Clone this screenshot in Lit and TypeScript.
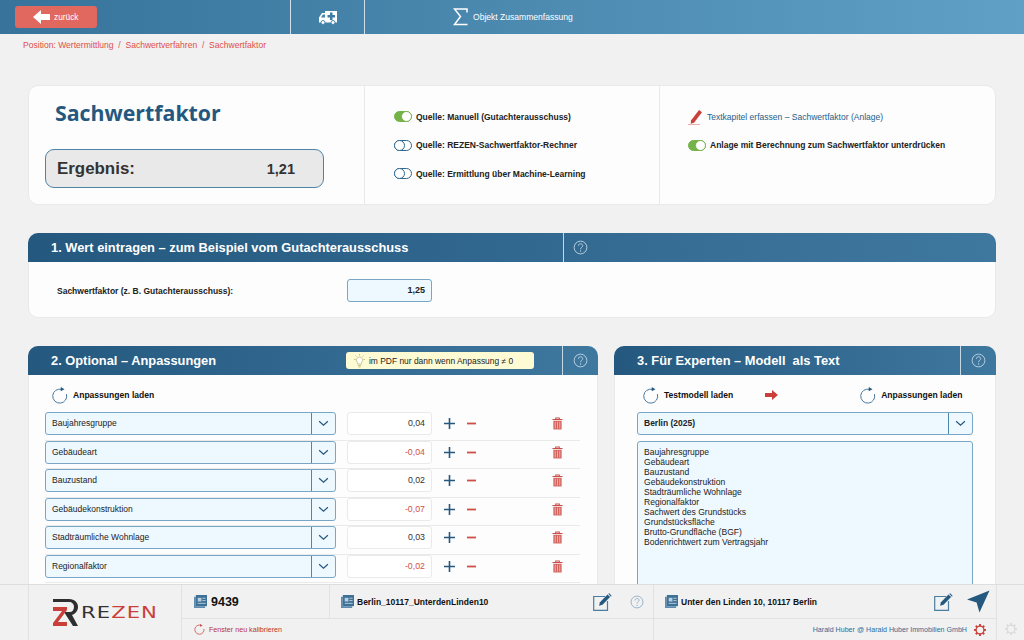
import { LitElement, html, css, svg } from 'lit';
import { customElement } from 'lit/decorators.js';

const HELP = html`<svg class="help" viewBox="0 0 16 16"><circle cx="8" cy="8" r="6.8" fill="none" stroke="currentColor" stroke-width="0.9"/><path d="M5.8 6.2c0-1.4 1-2.2 2.3-2.2s2.2.8 2.2 2c0 1.700-2.200 1.800-2.200 3.800" fill="none" stroke="currentColor" stroke-width="0.9"/><circle cx="8.100" cy="11.700" r=".7" fill="currentColor"/></svg>`;

const REFRESH = html`<svg class="refresh" viewBox="0 0 18 18"><path d="M11.300 3.100A7.400 7.400 0 1 0 16.300 8" fill="none" stroke="#3f7096" stroke-width="1"/><path d="M10.300 .6l4 2.300-4 2.200z" fill="#24587f"/></svg>`;

const CHEVRON = html`<svg class="chevron" viewBox="0 0 12 8"><path d="M1 1.500l5 4.500 5-4.500" fill="none" stroke="#24587f" stroke-width="1.400"/></svg>`;

const TRASH = html`<svg class="trash" viewBox="0 0 12 14"><path d="M.5 2.700h11M4 2.500V1h4v1.500" fill="none" stroke="#c9504a" stroke-width="1.100"/><path d="M1.500 4h9v9.500h-9z" fill="#d2625c"/><path d="M3.500 5v7.500M6 5v7.500M8.500 5v7.500" stroke="#f6dfdd" stroke-width=".7"/></svg>`;

const STACK = html`<svg class="stack" viewBox="0 0 14 14"><path d="M0 2h2v10h10v2H0z" fill="#5f8cae"/><rect x="2" y="0" width="12" height="12" fill="#3f7096"/><rect x="4" y="3" width="4" height="4" fill="#b9cede"/><path d="M9 3.500h3.500M9 6h3.500M4 9h8.500" stroke="#b9cede" stroke-width="1"/></svg>`;

const EDIT = html`<svg class="edit" viewBox="0 0 19 18"><path d="M12 3.500H.7v13.800h13.800V8" fill="none" stroke="#4a7da2" stroke-width="1.200"/><path d="M6 12.700l1-3.500 7.500-7.700 2.600 2.600-7.600 7.600z" fill="#24587f"/><path d="M15.300.8l.9-.5 2.400 2.400-.6 1z" fill="#24587f"/></svg>`;

const GEAR = (color: string) => html`<svg class="gear" viewBox="0 0 14 14"><circle cx="7" cy="7" r="4.600" fill="none" stroke=${color} stroke-width="1.500"/>${[0, 45, 90, 135, 180, 225, 270, 315].map((a) => svg`<rect x="5.900" y="0" width="2.200" height="2.600" fill=${color} transform="rotate(${a} 7 7)"/>`)}</svg>`;

const ADJUSTMENTS = [
  { name: 'Baujahresgruppe', value: '0,04' },
  { name: 'Gebäudeart', value: '-0,04' },
  { name: 'Bauzustand', value: '0,02' },
  { name: 'Gebäudekonstruktion', value: '-0,07' },
  { name: 'Stadträumliche Wohnlage', value: '0,03' },
  { name: 'Regionalfaktor', value: '-0,02' },
];

const MODEL_TEXT = [
  'Baujahresgruppe',
  'Gebäudeart',
  'Bauzustand',
  'Gebäudekonstruktion',
  'Stadträumliche Wohnlage',
  'Regionalfaktor',
  'Sachwert des Grundstücks',
  'Grundstücksfläche',
  'Brutto-Grundfläche (BGF)',
  'Bodenrichtwert zum Vertragsjahr',
];

@customElement('app-root')
export class AppRoot extends LitElement {
  static styles = css`
    :host {
      display: grid;
      grid-template-rows: 34px 1fr 56px;
      height: 640px;
      overflow: hidden;
      background: #f1f1f1;
      font-family: 'Liberation Sans', Arial, sans-serif;
      color: #222;
    }

    /* top bar */
    .topbar {
      display: grid;
      grid-template-columns: 290px 74px 1fr;
      background: linear-gradient(90deg, #37739a, #60a0c6);
      color: #fff;
    }
    .topcell { display: flex; align-items: center; }
    .topcell + .topcell { border-left: 1px solid #cfe0ea; }
    .back {
      display: flex;
      align-items: center;
      gap: 4px;
      box-sizing: border-box;
      width: 82px;
      height: 22px;
      margin-left: 15px;
      padding-left: 18px;
      background: #e0685f;
      border-radius: 3px;
      font-size: 8.300px;
    }
    .back svg { width: 17px; height: 14px; }
    .amb { justify-content: center; }
    .amb svg { width: 18px; height: 15px; }
    .summary { padding-left: 88px; gap: 5px; font-size: 8.550px; }
    .summary svg { width: 15px; height: 18px; }

    /* scroll area */
    .main { overflow: hidden; min-height: 0; padding: 0 28px; }
    .crumbs {
      margin: 0 -5px;
      height: 22px;
      line-height: 22px;
      font-size: 8.560px;
      color: #df5047;
      white-space: pre;
    }
    .card {
      background: #fdfdfd;
      border: 1px solid #e9e9e9;
      border-radius: 10px;
      box-sizing: border-box;
    }
    .overview {
      display: grid;
      grid-template-columns: 335px 295px 1fr;
      height: 120px;
      margin-top: 29px;
    }
    .col { padding-left: 29px; border-left: 1px solid #e9e9e9; }
    .col:first-child { border-left: 0; padding-left: 16px; }
    .col:last-child { padding-left: 28px; }
    .title {
      margin: 13px 0 0 10px;
      font: 700 21.300px/28px 'Open Sans', sans-serif;
      color: #24587f;
    }
    .result {
      display: flex;
      align-items: center;
      box-sizing: border-box;
      width: 279px;
      height: 39px;
      margin-top: 22px;
      padding: 0 28px 0 11px;
      background: #e9e9e9;
      border: 1px solid #4f83a8;
      border-radius: 9px;
      font-weight: 700;
      color: #333;
    }
    .result b { flex: 1; font-size: 16.900px; }
    .result span { font-size: 14.500px; }
    .opts { display: flex; flex-direction: column; gap: 17.500px; padding-top: 25px; }
    .opt { display: flex; align-items: center; gap: 4px; height: 11px; font-size: 8.500px; font-weight: 700; }
    .toggle {
      position: relative;
      box-sizing: border-box;
      flex: none;
      width: 18px;
      height: 11px;
      border: 1px solid #2f6790;
      border-radius: 6px;
      background: #fff;
    }
    .toggle::after {
      content: '';
      position: absolute;
      left: -1px;
      top: -1px;
      width: 9px;
      height: 9px;
      border: 1px solid #2f6790;
      border-radius: 50%;
      background: #fff;
    }
    .toggle.on { background: #74b348; border-color: #74b348; }
    .toggle.on::after { left: auto; right: -1px; border-color: #74b348; }
    .link { color: #24608c; font-weight: 400; gap: 4px; font-size: 8.520px; }
    .link svg { width: 15px; height: 16px; flex: none; }

    /* panels */
    .head {
      display: flex;
      align-items: center;
      height: 29px;
      margin: -1px -1px 0;
      border-radius: 10px 10px 0 0;
      background: linear-gradient(90deg, #24587f, #3f789f);
      color: #fff;
    }
    .head h2 { flex: 1; margin: 0; padding-left: 23px; font-size: 12.850px; font-weight: 700; }
    .head .tail {
      display: flex;
      align-items: center;
      justify-content: center;
      align-self: stretch;
      width: 35px;
      border-left: 1px solid #c6d8e4;
      color: #c8dae6;
    }
    .help { width: 15px; height: 15px; }
    .value-card { height: 85px; margin-top: 28px; }
    .value-card .tail { width: 433px; box-sizing: border-box; justify-content: flex-start; padding-left: 9px; }
    .value-row {
      display: grid;
      grid-template-columns: 290px 85px;
      align-items: center;
      padding: 17px 0 0 28px;
      font-size: 8.500px;
      font-weight: 700;
    }
    .num {
      box-sizing: border-box;
      height: 23px;
      line-height: 21px;
      padding-right: 6px;
      text-align: right;
      background: #eef8ff;
      border: 1px solid #79a6c5;
      border-radius: 3px;
      font-size: 9px;
      font-weight: 700;
    }
    .panels {
      display: grid;
      grid-template-columns: 570px 382px;
      gap: 16px;
      margin-top: 28px;
    }
    .panel { height: 300px; }
    .hint {
      display: flex;
      align-items: center;
      gap: 3px;
      box-sizing: border-box;
      width: 188px;
      height: 17px;
      margin-right: 28px;
      padding-left: 7px;
      background: #fdfbd3;
      border-radius: 3px;
      color: #222;
      font-size: 8.430px;
    }
    .hint svg { width: 13px; height: 14px; }
    .loaders {
      display: flex;
      align-items: center;
      box-sizing: border-box;
      height: 37px;
      padding-top: 2px;
      font-size: 8.550px;
      font-weight: 700;
      color: #111;
    }
    .loader { display: flex; align-items: center; gap: 5px; }
    .refresh { width: 17px; height: 18px; }
    .left .loaders { padding-left: 22px; }
    .rows { padding: 0 17px 0 16px; }
    .adj {
      display: grid;
      grid-template-columns: 302px 85px 34px 27px 1fr;
      align-items: center;
      height: 28.500px;
      box-sizing: border-box;
      padding-bottom: 5px;
      border-bottom: 1px solid #eaeaea;
      font-size: 8.500px;
    }
    .select {
      display: flex;
      align-items: stretch;
      box-sizing: border-box;
      height: 23px;
      background: #eef8ff;
      border: 1px solid #79a6c5;
      border-radius: 3px;
      color: #222;
    }
    .select span { flex: 1; line-height: 21px; padding-left: 6px; }
    .select i { display: flex; align-items: center; justify-content: center; width: 23px; border-left: 1px solid #4f86ab; }
    .chevron { width: 11px; height: 7px; }
    .adj .select { margin-right: 11px; }
    .adj .box {
      box-sizing: border-box;
      height: 23px;
      line-height: 21px;
      padding-right: 6px;
      text-align: right;
      background: #fff;
      border: 1px solid #eaeaea;
      border-radius: 3px;
      color: #333;
      font-size: 8.800px;
    }
    .adj .neg { color: #d0514a; }
    .plus, .minus { width: 11px; height: 11px; }
    .plus { margin-left: 12px; }
    .trash { width: 11px; height: 13px; justify-self: end; margin-right: 17px; }
    .right .loaders { padding-left: 27px; }
    .right .arrow { width: 13px; height: 10px; margin-left: 32px; }
    .right .loader.second { margin-left: 81px; }
    .right .select, .right .area { margin: 0 22px 0 22px; }
    .right .select { font-size: 8.500px; font-weight: 700; color: #222; }
    .area {
      box-sizing: border-box;
      height: 160px;
      margin-top: 6px !important;
      padding: 5px 6px;
      background: #eef8ff;
      border: 1px solid #79a6c5;
      border-radius: 3px;
      font-size: 8.550px;
      line-height: 10px;
      color: #222;
    }

    /* footer */
    .footer {
      display: grid;
      grid-template-columns: 28px 153px 148px 324px 343px 28px;
      grid-template-rows: 33px 1fr;
      border-top: 1px solid #dedede;
      background: #f1f1f1;
      z-index: 1;
    }
    .fcell { display: flex; align-items: center; border-left: 1px solid #e2e2e2; box-sizing: border-box; }
    .fcell.bottom { border-top: 1px solid #e2e2e2; }
    .logo { grid-row: 1 / 3; grid-column: 2; gap: 2px; padding-left: 23px; }
    .logo svg { width: 27px; height: 28px; flex: none; }
    .wordmark {
      font: 400 16px 'DejaVu Sans', sans-serif;
      letter-spacing: .8px;
      color: #333;
      transform: scaleX(1.32);
      transform-origin: left center;
    }
    .wordmark span { color: #c9403a; }
    .stack { width: 13px; height: 13px; flex: none; }
    .no { gap: 4px; padding-left: 12px; font-size: 12.500px; font-weight: 700; color: #111; }
    .name { gap: 3px; padding-left: 11px; font-size: 8.500px; font-weight: 700; color: #111; }
    .name .grow { flex: 1; }
    .edit { width: 19px; height: 18px; flex: none; }
    .name .help { color: #7fa5c0; margin: 0 9px 0 15px; width: 14px; height: 14px; }
    .send { width: 23px; height: 23px; margin: 0 6px 0 11px; flex: none; }
    .calib { grid-column: 3 / 5; gap: 4px; padding-left: 12px; font-size: 7.150px; color: #b9352f; }
    .calib svg { width: 11px; height: 11px; }
    .user { justify-content: flex-end; gap: 7px; padding-right: 10px; font-size: 7.100px; color: #2f6a96; }
    .gear { width: 12px; height: 12px; flex: none; }
    .far { border-left: 1px solid #e2e2e2; display: flex; align-items: center; justify-content: center; }
  `;

  private option(label: string, on: boolean) {
    return html`<div class="opt"><span class="toggle ${on ? 'on' : ''}"></span>${label}</div>`;
  }

  private adjustment(row: { name: string; value: string }) {
    return html`
      <div class="adj">
        <div class="select"><span>${row.name}</span><i>${CHEVRON}</i></div>
        <div class="box ${row.value.startsWith('-') ? 'neg' : ''}">${row.value}</div>
        <svg class="plus" viewBox="0 0 11 11"><path d="M5.500 0v11M0 5.500h11" stroke="#24587f" stroke-width="1.600"/></svg>
        <svg class="minus" viewBox="0 0 11 11"><path d="M1 5.500h9" stroke="#cf4f48" stroke-width="1.800"/></svg>
        ${TRASH}
      </div>
    `;
  }

  render() {
    return html`
      <header class="topbar">
        <div class="topcell">
          <div class="back">
            <svg viewBox="0 0 17 14"><path d="M0 7l8-7v4h9v6H8v4z" fill="#fff"/></svg>
            zurück
          </div>
        </div>
        <div class="topcell amb">
          <svg viewBox="0 0 18 15"><path d="M6 1h12v11.500H0V7.500L3 3h3z" fill="#fff"/><path d="M2 7.500L3.800 4.500H6v3z" fill="#4a86ac"/><path d="M11 2.500h2.500V5H16v2.500h-2.500V10H11V7.500H8.500V5H11z" fill="#3f7ca2"/><circle cx="4" cy="12.500" r="2" fill="#fff" stroke="#4a86ac"/><circle cx="14" cy="12.500" r="2" fill="#fff" stroke="#4a86ac"/></svg>
        </div>
        <div class="topcell summary">
          <svg viewBox="0 0 15 18"><path d="M14 4.500V1H1.500l6 7.500-6 8H14.500" fill="none" stroke="#fff" stroke-width="1.500"/></svg>
          Objekt Zusammenfassung
        </div>
      </header>

      <main class="main">
        <div class="crumbs">Position: Wertermittlung  /  Sachwertverfahren  /  Sachwertfaktor</div>

        <section class="card overview">
          <div class="col">
            <div class="title">Sachwertfaktor</div>
            <div class="result"><b>Ergebnis:</b><span>1,21</span></div>
          </div>
          <div class="col opts">
            ${this.option('Quelle: Manuell (Gutachterausschuss)', true)}
            ${this.option('Quelle: REZEN-Sachwertfaktor-Rechner', false)}
            ${this.option('Quelle: Ermittlung über Machine-Learning', false)}
          </div>
          <div class="col opts">
            <div class="opt link">
              <svg viewBox="0 0 15 16"><path d="M3 11.500L11 1l3 2.300-8 10.500-3.300 1z" fill="#c9403a"/><path d="M0 15.500h12" stroke="#e69a95" stroke-width=".8"/></svg>
              Textkapitel erfassen – Sachwertfaktor (Anlage)
            </div>
            ${this.option('Anlage mit Berechnung zum Sachwertfaktor unterdrücken', true)}
          </div>
        </section>

        <section class="card value-card">
          <div class="head">
            <h2>1. Wert eintragen – zum Beispiel vom Gutachterausschuss</h2>
            <div class="tail">${HELP}</div>
          </div>
          <div class="value-row">
            <span>Sachwertfaktor (z. B. Gutachterausschuss):</span>
            <div class="num">1,25</div>
          </div>
        </section>

        <div class="panels">
          <section class="card panel left">
            <div class="head">
              <h2>2. Optional – Anpassungen</h2>
              <div class="hint">
                <svg viewBox="0 0 13 14"><path d="M6.500 3a3.200 3.200 0 0 0-2 5.700V10h4V8.700a3.200 3.200 0 0 0-2-5.700z" fill="#fff" stroke="#b7b277" stroke-width=".7"/><path d="M5 11.500h3M5.500 13h2M6.500 0v1.500M1 5.500h1.500M10.500 5.500H12M2.500 1.500l1 1M10.500 1.500l-1 1" stroke="#b7b277" stroke-width=".8"/></svg>
                im PDF nur dann wenn Anpassung ≠ 0
              </div>
              <div class="tail">${HELP}</div>
            </div>
            <div class="loaders"><div class="loader">${REFRESH} Anpassungen laden</div></div>
            <div class="rows">${ADJUSTMENTS.map((row) => this.adjustment(row))}</div>
          </section>

          <section class="card panel right">
            <div class="head">
              <h2>3. Für Experten – Modell&nbsp; als Text</h2>
              <div class="tail">${HELP}</div>
            </div>
            <div class="loaders">
              <div class="loader">${REFRESH} Testmodell laden</div>
              <svg class="arrow" viewBox="0 0 13 10"><path d="M0 3h7V0l6 5-6 5V7H0z" fill="#c9403a"/></svg>
              <div class="loader second">${REFRESH} Anpassungen laden</div>
            </div>
            <div class="select"><span>Berlin (2025)</span><i>${CHEVRON}</i></div>
            <div class="area">${MODEL_TEXT.map((line) => html`<div>${line}</div>`)}</div>
          </section>
        </div>
      </main>

      <footer class="footer">
        <div></div>
        <div class="fcell logo">
          <svg viewBox="0 0 27 28"><path d="M1 0h16c6 0 9 4 9 8s-3 7-6 8l6 11h-5L12 13h6c2 0 4-2 4-5s-2-5-5-5H1z" fill="#2e2e2e"/><path d="M1 8h14v3L6 23h9v4H1v-3l9-12H1z" fill="#c9403a"/></svg>
          <div class="wordmark">RE<span>ZEN</span></div>
        </div>
        <div class="fcell no">${STACK} 9439</div>
        <div class="fcell name">${STACK} Berlin_10117_UnterdenLinden10<span class="grow"></span>${EDIT}${HELP}</div>
        <div class="fcell name">${STACK} Unter den Linden 10, 10117 Berlin<span class="grow"></span>${EDIT}
          <svg class="send" viewBox="0 0 24 23"><path d="M23.500 0L13 23l-3-10.500L0 9.500z" fill="#24587f"/></svg>
        </div>
        <div class="far"></div>
        <div></div>
        <div class="fcell bottom calib">
          <svg viewBox="0 0 11 11"><path d="M7 1.300A4.600 4.600 0 1 0 10 5" fill="none" stroke="#c9504a" stroke-width=".8"/><path d="M6 0l2.700 1.400L6 2.800z" fill="#c9504a"/></svg>
          Fenster neu kalibrieren
        </div>
        <div class="fcell bottom user">Harald Huber @ Harald Huber Immobilien GmbH ${GEAR('#c9403a')}</div>
        <div class="far">${GEAR('#dcdcdc')}</div>
      </footer>
    `;
  }
}
